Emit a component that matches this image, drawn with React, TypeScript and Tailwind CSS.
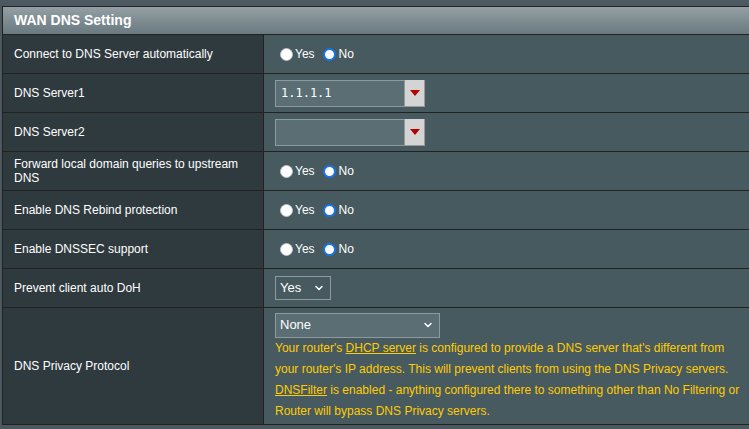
import { ChevronDown } from 'lucide-react';

function Radio({ checked }: { checked: boolean }) {
  return checked ? (
    <span className="inline-block w-[13px] h-[13px] rounded-full bg-white border-[2px] border-[#1a73e8]" />
  ) : (
    <span className="inline-block w-[13px] h-[13px] rounded-full bg-white border border-[#c0c0c0]" />
  );
}

function YesNo() {
  return (
    <div className="flex items-center text-[12px] text-white">
      <Radio checked={false} />
      <span className="ml-[2px]">Yes</span>
      <span className="ml-[8px] flex"><Radio checked /></span>
      <span className="ml-[3px]">No</span>
    </div>
  );
}

function ComboInput({ value }: { value: string }) {
  return (
    <div className="flex h-[27px]">
      <div className="w-[130px] h-[27px] bg-[#5a6e74] border border-[#8e9a9e] flex items-center pl-[5px] text-[12px] text-white font-['DejaVu_Sans_Mono',monospace]">
        {value}
      </div>
      <div className="w-[20px] h-[27px] bg-[#d4d4d4] border-r border-b border-[#9a9a9a] flex items-center justify-center">
        <svg width="10" height="6" viewBox="0 0 10 6">
          <path d="M0 0 H10 L5 6 Z" fill="#b30000" />
        </svg>
      </div>
    </div>
  );
}

function Row({ label, children, height = 'h-[39px]' }: { label: React.ReactNode; children: React.ReactNode; height?: string }) {
  return (
    <div className={`flex border-t border-[#222] ${height}`}>
      <div className="w-[261px] shrink-0 bg-[#2f3a3f] border-r border-[#222] flex items-center pl-[11px] pr-2 text-[12px] text-white leading-[14px]">
        {label}
      </div>
      <div className="flex-1 bg-[#475a60] flex items-center pl-[11px]">{children}</div>
    </div>
  );
}

export default function App() {
  return (
    <div className="w-[749px] h-[429px] bg-[#4d5960] overflow-hidden pt-[6px] pl-[2px] font-['Liberation_Sans',Arial,sans-serif]">
      <div className="w-[780px] border border-[#222]">
        <div className="h-[27px] bg-gradient-to-b from-[#939fa4] to-[#6a7a80] flex items-center pl-[11px] text-[14px] font-bold text-white">
          WAN DNS Setting
        </div>
        <Row label="Connect to DNS Server automatically"><div className="pl-[5px]"><YesNo /></div></Row>
        <Row label="DNS Server1"><ComboInput value="1.1.1.1" /></Row>
        <Row label="DNS Server2"><ComboInput value="" /></Row>
        <Row label={<span>Forward local domain queries to upstream<br />DNS</span>}><div className="pl-[5px]"><YesNo /></div></Row>
        <Row label="Enable DNS Rebind protection"><div className="pl-[5px]"><YesNo /></div></Row>
        <Row label="Enable DNSSEC support"><div className="pl-[5px]"><YesNo /></div></Row>
        <Row label="Prevent client auto DoH">
          <div className="w-[56px] h-[24px] bg-[#475a60] border border-[#8e9a9e] flex items-center justify-between pl-[4px] pr-[5px] text-[13px] text-white">
            <span>Yes</span>
            <ChevronDown className="w-[12px] h-[12px]" strokeWidth={3} />
          </div>
        </Row>
        <Row label="DNS Privacy Protocol" height="h-[117px]">
          <div className="flex flex-col pt-[2px]">
            <div className="w-[165px] h-[25px] bg-[#5a6e74] border border-[#8e9a9e] flex items-center justify-between pl-[4px] pr-[5px] text-[13px] text-white">
              <span>None</span>
              <ChevronDown className="w-[12px] h-[12px]" strokeWidth={3} />
            </div>
            <p className="mt-0 text-[12px] leading-[21px] text-[#ffcc00] w-[470px]">
              Your router's <span className="underline">DHCP server</span> is configured to provide a DNS server that's different from your router's IP address. This will prevent clients from using the DNS Privacy servers.
              <br />
              <span className="underline">DNSFilter</span> is enabled - anything configured there to something other than No Filtering or Router will bypass DNS Privacy servers.
            </p>
          </div>
        </Row>
      </div>
    </div>
  );
}
